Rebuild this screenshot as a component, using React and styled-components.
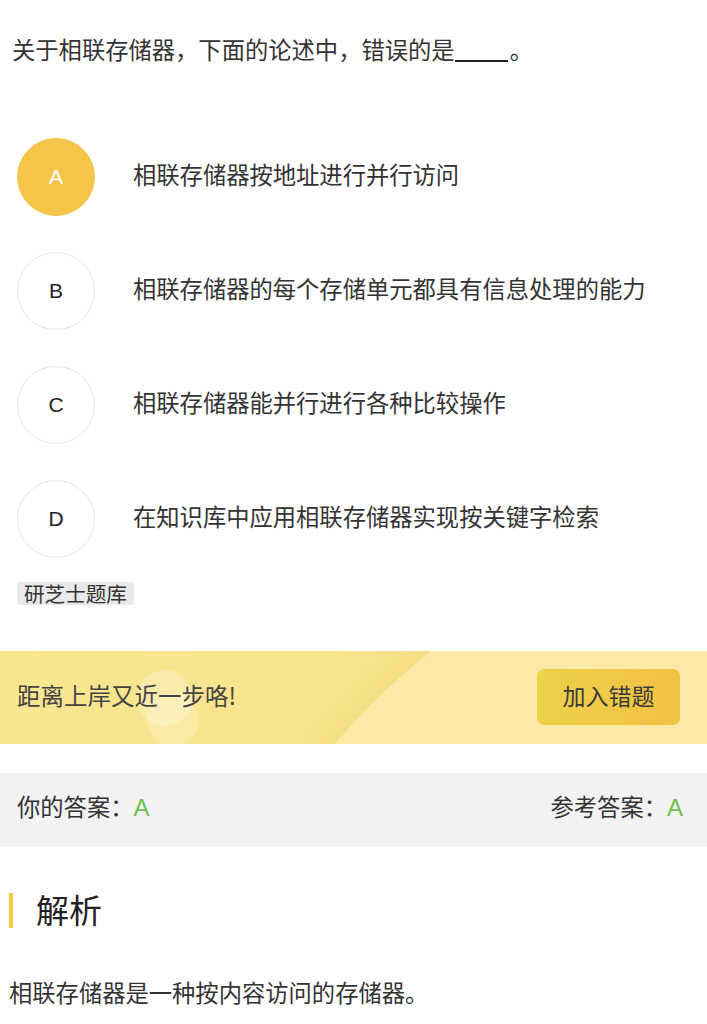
import React from 'react';
import styled, { createGlobalStyle } from 'styled-components';

const GlobalStyle = createGlobalStyle`
    body {
        margin: 0;
        background: #fff;
        font-family: "Noto Sans CJK SC", "Noto Sans", sans-serif;
        color: #333;
    }
`;

const Question = styled.div`
    padding: 33px 12px 0;
    font-size: 23.3px;
    line-height: 33px;
    color: #333;
`;

const Blank = styled.span`
    display: inline-block;
    width: 53px;
    height: 22px;
    margin: 0 2px 0 0;
    border-bottom: 2px solid #222;
    vertical-align: -3px;
`;

const Options = styled.div`
    display: flex;
    flex-direction: column;
    gap: 36px;
    padding: 72px 17px 0;
`;

const Option = styled.div`
    display: flex;
    align-items: center;
    gap: 38px;
`;

const Circle = styled.div`
    flex: none;
    width: 78px;
    height: 78px;
    box-sizing: border-box;
    border-radius: 50%;
    display: flex;
    align-items: center;
    justify-content: center;
    font-family: "Liberation Sans", Arial, sans-serif;
    font-size: 21px;
    color: ${p => (p.$active ? '#fff' : '#222')};
    background: ${p => (p.$active ? '#f3c548' : '#fff')};
    border: 1px solid ${p => (p.$active ? '#f3c548' : '#e6e6e6')};
`;

const OptionText = styled.div`
    padding-bottom: 6px;
    font-size: 23.3px;
    color: #333;
`;

const Tag = styled.span`
    display: inline-block;
    margin: 24px 0 0 17px;
    padding: 0 7px;
    font-size: 20.6px;
    line-height: 23px;
    color: #333;
    background: #e9e9e9;
    border-radius: 3px;
`;

const Banner = styled.div`
    position: relative;
    overflow: hidden;
    box-sizing: border-box;
    margin-top: 44px;
    height: 93px;
    display: flex;
    align-items: center;
    justify-content: space-between;
    padding: 0 27px 5px 17px;
    background: linear-gradient(90deg, #f9e690, #f8e38a);
`;

const Glow = styled.div`
    position: absolute;
    border-radius: 50%;
    background: ${p => p.$color};
    box-shadow: ${p => p.$shadow || 'none'};
    left: ${p => p.$x}px;
    top: ${p => p.$y}px;
    width: ${p => p.$size}px;
    height: ${p => p.$size}px;
`;

const BannerText = styled.div`
    position: relative;
    font-size: 23.5px;
    color: #444;
`;

const AddButton = styled.button`
    position: relative;
    top: 2px;
    width: 143px;
    height: 56px;
    padding: 0 0 5px;
    border: none;
    border-radius: 7px;
    background: linear-gradient(90deg, #edd24b, #f2c143);
    font-family: inherit;
    font-size: 23px;
    color: #3a3a3a;
`;

const AnswerBar = styled.div`
    box-sizing: border-box;
    margin-top: 29px;
    height: 74px;
    display: flex;
    align-items: center;
    justify-content: space-between;
    padding: 0 24px 8px 17px;
    background: #f2f2f2;
    font-size: 23.3px;
    color: #333;
`;

const Green = styled.span`
    font-family: "Liberation Sans", Arial, sans-serif;
    font-size: 24px;
    color: #6cc24a;
`;

const Heading = styled.div`
    margin: 43px 0 0 9px;
    display: flex;
    align-items: center;
    gap: 23px;
    font-size: 33px;
    line-height: 38px;
    color: #222;

    &::before {
        content: '';
        width: 4px;
        height: 35px;
        margin-top: 2px;
        background: #f6c84a;
    }
`;

const Analysis = styled.div`
    margin: 48px 0 0 9px;
    font-size: 23.3px;
    line-height: 32px;
    color: #333;
`;

const options = [
    { key: 'A', text: '相联存储器按地址进行并行访问', active: true },
    { key: 'B', text: '相联存储器的每个存储单元都具有信息处理的能力' },
    { key: 'C', text: '相联存储器能并行进行各种比较操作' },
    { key: 'D', text: '在知识库中应用相联存储器实现按关键字检索' },
];

export default function App() {
    return (
        <>
            <GlobalStyle />
            <Question>
                关于相联存储器，下面的论述中，错误的是<Blank />。
            </Question>
            <Options>
                {options.map(o => (
                    <Option key={o.key}>
                        <Circle $active={o.active}>{o.key}</Circle>
                        <OptionText>{o.text}</OptionText>
                    </Option>
                ))}
            </Options>
            <Tag>研芝士题库</Tag>
            <Banner>
                <Glow
                    $color="#fbeaa5"
                    $shadow="0 0 40px 6px rgba(236, 206, 110, 0.45)"
                    $x={162}
                    $y={-158}
                    $size={1436}
                />
                <Glow $color="rgba(255,255,255,0.26)" $x={137} $y={19} $size={56} />
                <Glow $color="rgba(255,255,255,0.2)" $x={147} $y={43} $size={52} />
                <BannerText>距离上岸又近一步咯!</BannerText>
                <AddButton>加入错题</AddButton>
            </Banner>
            <AnswerBar>
                <span>你的答案：<Green>A</Green></span>
                <span>参考答案：<Green>A</Green></span>
            </AnswerBar>
            <Heading>解析</Heading>
            <Analysis>相联存储器是一种按内容访问的存储器。</Analysis>
        </>
    );
}
